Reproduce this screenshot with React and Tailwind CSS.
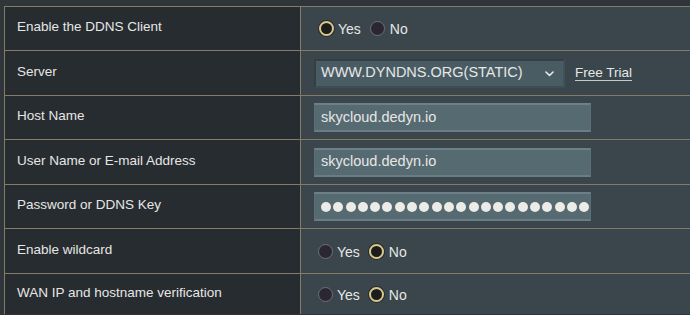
import React from "react";

function Radio({ on }) {
  return on ? (
    <span className="box-border w-[15px] h-[15px] rounded-full bg-[#1c1c1c] border-[2.5px] border-[#d5c88f] shadow-[0_0_0_1px_#2a2a2a] shrink-0" />
  ) : (
    <span className="box-border w-[15px] h-[15px] rounded-full bg-[#2a2732] border border-[#6e7176] shrink-0" />
  );
}

function YesNo({ yes }) {
  return (
    <div className="flex items-center text-[14px]">
      <Radio on={yes} />
      <span className="ml-[4px] mt-[2px]">Yes</span>
      <span className="ml-[9px] flex items-center">
        <Radio on={!yes} />
        <span className="ml-[5px] mt-[2px]">No</span>
      </span>
    </div>
  );
}

function TextBox({ children }) {
  return (
    <div className="box-border w-[277px] h-[29px] bg-[#566a71] border-t-[2px] border-b-[2px] border-t-[#6d8087] border-b-[#6a7d83] border-x border-x-[#5c6f76] flex items-center pl-[6px] overflow-hidden text-[14.5px]">
      {children}
    </div>
  );
}

function Row({ label, h, last, children }) {
  return (
    <div
      className={`flex ${h} ${last ? "" : "border-b border-[#857c67]"}`}
    >
      <div className="w-[296px] shrink-0 bg-[#262c2f] border-r border-[#857c67] flex items-center pl-[12px] pb-[2px]">
        {label}
      </div>
      <div className="flex-1 bg-[#3a464b] flex items-center pl-[13px]">
        {children}
      </div>
    </div>
  );
}

export default function App() {
  const dots = Array.from({ length: 24 });
  return (
    <div
      className="w-[690px] h-[315px] bg-[#2f3538] pt-[6px] pl-[4px] overflow-hidden text-[13.5px] text-[#e6e6e6]"
      style={{ fontFamily: '"Liberation Sans", Arial, sans-serif' }}
    >
      <div className="border-t border-l border-[#857c67] flex flex-col">
        <Row label="Enable the DDNS Client" h="h-[44px]">
          <div className="pl-[5px]">
            <YesNo yes={true} />
          </div>
        </Row>
        <Row label="Server" h="h-[45px]">
          <div className="flex items-center">
            <div className="box-border w-[251px] h-[29px] bg-[#4a5c63] border-[2px] border-[#34403f] border-b-[#3f4d52] border-r-[#42525a] flex items-center pl-[5px] pr-[9px] text-[14.5px]">
              <span className="flex-1">WWW.DYNDNS.ORG(STATIC)</span>
              <svg width="9" height="6" viewBox="0 0 9 6" className="mt-[1px]">
                <path d="M1 1 L4.5 4.5 L8 1" fill="none" stroke="#e8e8e8" strokeWidth="1.6" strokeLinecap="round" strokeLinejoin="round" />
              </svg>
            </div>
            <span className="ml-[10px] underline underline-offset-[3px] decoration-[1px] decoration-[#c4c9cb]">Free Trial</span>
          </div>
        </Row>
        <Row label="Host Name" h="h-[44px]">
          <TextBox>skycloud.dedyn.io</TextBox>
        </Row>
        <Row label="User Name or E-mail Address" h="h-[45px]">
          <TextBox>skycloud.dedyn.io</TextBox>
        </Row>
        <Row label="Password or DDNS Key" h="h-[44px]">
          <TextBox>
            <div className="flex items-center gap-[2.3px] overflow-hidden w-[268px] shrink-0">
              {dots.map((_, i) => (
                <span key={i} className="w-[10px] h-[10px] rounded-full bg-[#ecebe6] shrink-0" />
              ))}
            </div>
          </TextBox>
        </Row>
        <Row label="Enable wildcard" h="h-[45px]">
          <div className="pl-[4px]">
            <YesNo yes={false} />
          </div>
        </Row>
        <Row label="WAN IP and hostname verification" h="h-[40px]" last>
          <div className="pl-[4px]">
            <YesNo yes={false} />
          </div>
        </Row>
      </div>
    </div>
  );
}
